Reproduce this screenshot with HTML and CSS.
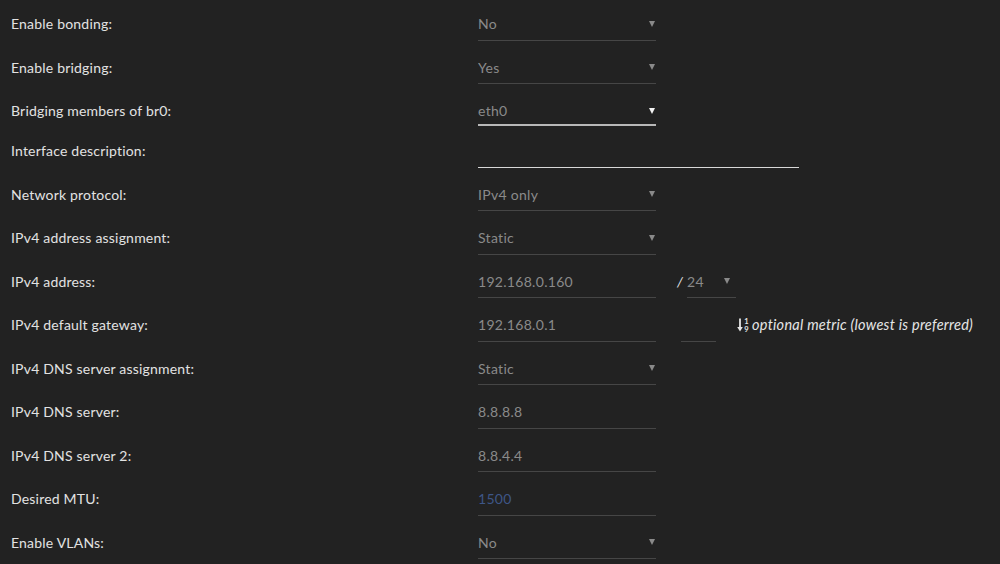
FILE: index.html
```html
<!DOCTYPE html>
<html>
<head>
    <title>Interface settings</title>
    <link rel="stylesheet" href="styles.css">
</head>
<body>
    <div class="settings">
        <div class="row">
            <label>Enable bonding:</label>
            <div class="select-wrap"><select><option>No</option><option>Yes</option></select></div>
        </div>
        <div class="row">
            <label>Enable bridging:</label>
            <div class="select-wrap"><select><option>Yes</option><option>No</option></select></div>
        </div>
        <div class="row row-short">
            <label>Bridging members of br0:</label>
            <div class="select-wrap active"><select><option>eth0</option></select></div>
        </div>
        <div class="row">
            <label>Interface description:</label>
            <input type="text" class="wide active">
        </div>
        <div class="row">
            <label>Network protocol:</label>
            <div class="select-wrap"><select><option>IPv4 only</option><option>IPv6 only</option><option>IPv4 and IPv6</option></select></div>
        </div>
        <div class="row">
            <label>IPv4 address assignment:</label>
            <div class="select-wrap"><select><option>Static</option><option>DHCP</option></select></div>
        </div>
        <div class="row">
            <label>IPv4 address:</label>
            <input type="text" value="192.168.0.160">
            <span class="slash">/</span>
            <div class="select-wrap mask"><select><option>24</option></select></div>
        </div>
        <div class="row">
            <label>IPv4 default gateway:</label>
            <input type="text" value="192.168.0.1">
            <input type="text" class="metric">
            <span class="hint">
                <svg width="14" height="16" viewBox="0 0 14 16">
                    <path d="M3 1.5v10.5" stroke="#e6e6e6" stroke-width="1.8" fill="none"/>
                    <path d="M0.2 10L3 14.5L5.8 10Z" fill="#e6e6e6"/>
                    <text x="7.3" y="6.8" font-size="7.5" font-weight="bold" fill="#e6e6e6" font-family="Lato, sans-serif">1</text>
                    <text x="7.3" y="14.6" font-size="7.5" font-weight="bold" fill="#e6e6e6" font-family="Lato, sans-serif">9</text>
                </svg>
                <em>optional metric (lowest is preferred)</em>
            </span>
        </div>
        <div class="row">
            <label>IPv4 DNS server assignment:</label>
            <div class="select-wrap"><select><option>Static</option><option>DHCP</option></select></div>
        </div>
        <div class="row">
            <label>IPv4 DNS server:</label>
            <input type="text" value="8.8.8.8">
        </div>
        <div class="row">
            <label>IPv4 DNS server 2:</label>
            <input type="text" value="8.8.4.4">
        </div>
        <div class="row">
            <label>Desired MTU:</label>
            <input type="text" placeholder="1500">
        </div>
        <div class="row">
            <label>Enable VLANs:</label>
            <div class="select-wrap"><select><option>No</option><option>Yes</option></select></div>
        </div>
    </div>
</body>
</html>
```

FILE: styles.css
```css
body {
    margin: 0;
    background-color: #222222;
    font-family: Lato, "Open Sans", sans-serif;
    font-size: 14px;
    letter-spacing: 0.2px;
    color: #e6e6e6;
}

.settings {
    padding: 2px 0 0 11px;
}

.row {
    display: flex;
    align-items: center;
    height: 43.5px;
}

.row-short {
    box-sizing: border-box;
    height: 40px;
    padding-top: 3.5px;
}

label {
    width: 467px;
    flex-shrink: 0;
    color: #e2e2e2;
}

input[type="text"], select {
    box-sizing: border-box;
    width: 178px;
    height: 34px;
    padding: 7px 0 6px 0;
    margin: 0;
    border: none;
    border-bottom: 1px solid #464646;
    background: transparent;
    font-family: inherit;
    font-size: 14px;
    letter-spacing: 0.3px;
    color: #8a8a8a;
    outline: none;
    border-radius: 0;
}

select {
    appearance: none;
    -webkit-appearance: none;
    padding-right: 16px;
}

input::placeholder {
    color: #3e5687;
}

.select-wrap {
    position: relative;
    display: flex;
}

.select-wrap::after {
    content: "";
    position: absolute;
    right: 1px;
    top: 14px;
    border-left: 3.5px solid transparent;
    border-right: 3.5px solid transparent;
    border-top: 6px solid #8a8a8a;
    pointer-events: none;
}

.select-wrap.active select {
    border-bottom: 2px solid #b8b8b8;
    height: 30px;
    padding: 5px 16px 3px 0;
}

.select-wrap.active::after {
    border-top-color: #f2f2f2;
    top: 12px;
}

input.active {
    border-bottom: 1px solid #d8d8d8;
}

input.wide {
    width: 321px;
}

.slash {
    margin: 0 4px 0 21px;
    color: #e6e6e6;
    font-style: italic;
}

.mask select {
    width: 49px;
}

.mask::after {
    right: 6px;
}

input.metric {
    width: 35px;
    margin-left: 25px;
}

.hint {
    display: flex;
    align-items: center;
    margin-left: 21px;
    color: #e6e6e6;
}

.hint svg {
    margin-right: 1px;
}

.hint em {
    font-size: 14.5px;
    letter-spacing: 0.25px;
}
```
